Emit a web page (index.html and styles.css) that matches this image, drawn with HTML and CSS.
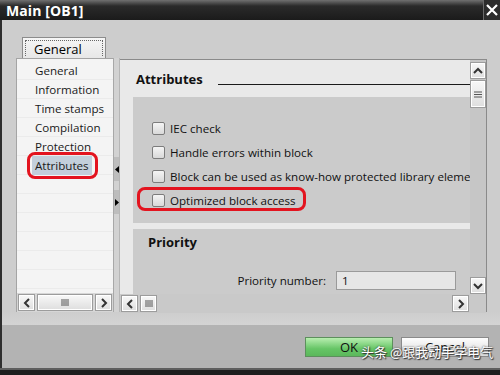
FILE: index.html
```html
<!DOCTYPE html>
<html lang="en">
<head>
  <meta charset="UTF-8">
  <title>Main [OB1]</title>
  <link rel="stylesheet" href="styles.css">
</head>
<body>
  <div class="window">
    <!-- Title bar -->
    <div class="titlebar">
      <span class="title">Main [OB1]</span>
      <span class="close">
        <svg width="14" height="14" viewBox="0 0 14 14"><path d="M2 2 L12 12 M12 2 L2 12" stroke="#fff" stroke-width="2.2"/></svg>
      </span>
    </div>

    <div class="content">
      <div class="tabs">
        <div class="tab"><span class="tab-label">General</span></div>
      </div>

      <div class="panel">
        <!-- Left navigation -->
        <div class="nav">
          <ul class="nav-list">
            <li>General</li>
            <li>Information</li>
            <li>Time stamps</li>
            <li>Compilation</li>
            <li>Protection</li>
            <li class="selected"><span class="sel">Attributes</span><span class="mark mark-nav"></span></li>
          </ul>
          <div class="hscroll">
            <span class="sbtn"><svg width="8" height="10" viewBox="0 0 8 10"><path d="M6 1 L2 5 L6 9" fill="none" stroke="#333" stroke-width="2"/></svg></span>
            <span class="thumb thumb-wide"><svg width="8" height="7" viewBox="0 0 8 7"><path d="M1 0V7M3 0V7M5 0V7M7 0V7" stroke="#555" stroke-width="1"/></svg></span>
            <span class="sbtn"><svg width="8" height="10" viewBox="0 0 8 10"><path d="M2 1 L6 5 L2 9" fill="none" stroke="#333" stroke-width="2"/></svg></span>
          </div>
        </div>

        <div class="splitter">
          <span class="split-btn"><svg width="4" height="7" viewBox="0 0 4 7"><path d="M4 0 L0 3.5 L4 7Z" fill="#000"/></svg></span>
          <span class="split-btn"><svg width="4" height="7" viewBox="0 0 4 7"><path d="M0 0 L4 3.5 L0 7Z" fill="#000"/></svg></span>
        </div>

        <!-- Right pane -->
        <div class="pane">
          <div class="pane-view">
            <div class="heading">
              <h2>Attributes</h2>
              <span class="rule"></span>
            </div>

            <div class="section checks">
              <label class="check"><span class="box"></span>IEC check</label>
              <label class="check"><span class="box"></span>Handle errors within block</label>
              <label class="check"><span class="box"></span>Block can be used as know-how protected library element</label>
              <label class="check"><span class="box"></span>Optimized block access<span class="mark mark-opt"></span></label>
            </div>

            <div class="section priority">
              <h3>Priority</h3>
              <div class="field">
                <span class="field-label">Priority number:</span>
                <span class="input">1</span>
              </div>
            </div>
          </div>

          <div class="vscroll">
            <span class="sbtn"><svg width="10" height="8" viewBox="0 0 10 8"><path d="M1 6 L5 2 L9 6" fill="none" stroke="#333" stroke-width="2"/></svg></span>
            <span class="thumb"><svg width="8" height="7" viewBox="0 0 8 7"><path d="M0 1H8M0 3.5H8M0 6H8" stroke="#555" stroke-width="1"/></svg></span>
            <span class="vtrack"></span>
            <span class="sbtn"><svg width="10" height="8" viewBox="0 0 10 8"><path d="M1 2 L5 6 L9 2" fill="none" stroke="#333" stroke-width="2"/></svg></span>
          </div>

          <div class="hscroll hscroll-pane">
            <span class="sbtn"><svg width="8" height="10" viewBox="0 0 8 10"><path d="M6 1 L2 5 L6 9" fill="none" stroke="#333" stroke-width="2"/></svg></span>
            <span class="thumb"><svg width="8" height="7" viewBox="0 0 8 7"><path d="M1 0V7M3 0V7M5 0V7M7 0V7" stroke="#555" stroke-width="1"/></svg></span>
            <span class="track"></span>
            <span class="sbtn"><svg width="8" height="10" viewBox="0 0 8 10"><path d="M2 1 L6 5 L2 9" fill="none" stroke="#333" stroke-width="2"/></svg></span>
          </div>
          <span class="corner"></span>
        </div>
      </div>
    </div>

    <!-- Dialog buttons -->
    <div class="footer">
      <button class="btn btn-ok">OK</button>
      <button class="btn">Cancel</button>
      <span class="watermark">头条 @跟我动手学电气</span>
    </div>
    <div class="bottom"></div>
  </div>
</body>
</html>
```

FILE: styles.css
```css
/* Reset */
* { margin: 0; padding: 0; box-sizing: border-box; }
html, body { width: 500px; height: 375px; overflow: hidden; }
body {
  font-family: "Open Sans", "Noto Sans", sans-serif;
  font-size: 11.6px;
  color: #111;
  background: #cdcdcd;
}

.window {
  display: flex;
  flex-direction: column;
  width: 500px;
  height: 375px;
}

/* Title bar */
.titlebar {
  height: 20px;
  flex: none;
  display: flex;
  align-items: center;
  justify-content: space-between;
  background: linear-gradient(#707070 0, #2a2a2a 6px, #1b1b1b 100%);
}
.title {
  color: #fff;
  font-weight: bold;
  font-size: 14px;
  padding-left: 6px;
  letter-spacing: 0.1px;
}
.close {
  width: 17px;
  height: 20px;
  display: flex;
  align-items: center;
  justify-content: center;
  border-left: 1px solid #6a6a6a;
  background: #2c2c2c;
}

/* Main content */
.content {
  height: 305px;
  flex: none;
  border-left: 2px solid #2e2e2e;
  padding: 17px 13px 0 14px;
  background: linear-gradient(#cdcdcd 0, #cdcdcd 292px, #d4d4d4 100%);
}

.tabs { height: 21px; display: flex; }
.tab {
  margin-left: 6px;
  width: 84px;
  height: 21px;
  border: 1px solid #8c8c8c;
  border-bottom: none;
  background: linear-gradient(#f6f6f6, #e7e7e7);
  padding: 2px;
}
.tab-label {
  display: block;
  height: 100%;
  border: 1px dotted #666;
  border-bottom: none;
  font-size: 13px;
  line-height: 17px;
  padding-left: 8px;
  color: #000;
}

.panel {
  display: flex;
  height: 254px;
}

/* Left navigation */
.nav {
  width: 97px;
  flex: none;
  display: flex;
  flex-direction: column;
  border-left: 1px solid #a4a4a4;
  border-top: 1px solid #a4a4a4;
  background: repeating-linear-gradient(#f4f4f4 0, #f4f4f4 18px, #ebebeb 18px, #ebebeb 19px);
  background-position: 0 2px;
}
.nav-list {
  list-style: none;
  flex: 1;
  padding-top: 2px;
}
.nav-list li {
  position: relative;
  height: 19px;
  line-height: 19px;
  padding-left: 18px;
  color: #1a1a1a;
}
.nav-list .sel {
  background: #c3cfdb;
  margin-left: -3px;
  padding: 2px 3px;
}

/* Red annotation marks */
.mark {
  position: absolute;
  border: 3px solid #e3141f;
  border-radius: 8px;
}
.mark-nav { left: 10px; top: -4px; width: 71px; height: 27px; }
.mark-opt { left: -15px; top: -1px; width: 169px; height: 24px; }

/* Scrollbars */
.hscroll {
  height: 19px;
  display: flex;
  align-items: center;
  gap: 2px;
  padding: 0 1px;
  background: #d6d6d6;
}
.sbtn, .thumb {
  flex: none;
  width: 17px;
  height: 17px;
  display: flex;
  align-items: center;
  justify-content: center;
  border: 1px solid #9c9c9c;
  background: linear-gradient(#f8f8f8, #dedede);
  box-shadow: inset 0 0 0 1px #fff;
}
.thumb-wide { width: 56px; }
.track { flex: 1; }
.hscroll-pane { background: #c9c9c9; }

.vscroll {
  display: grid;
  grid-template-rows: 17px 28px 1fr 17px;
  row-gap: 1px;
  padding-top: 2px;
  background: #c6c6c6;
}
.vscroll .sbtn, .vscroll .thumb { width: 16px; height: auto; }
.corner { background: #c9c9c9; }

/* Splitter */
.splitter {
  width: 7px;
  flex: none;
  display: flex;
  flex-direction: column;
  gap: 9px;
  padding-top: 99px;
  background: #d2d2d2;
  border-left: 1px solid #a8a8a8;
  border-right: 1px solid #b6b6b6;
}
.split-btn {
  height: 24px;
  display: flex;
  align-items: center;
  justify-content: center;
  background: #bdbdbd;
}

/* Right pane */
.pane {
  flex: 1;
  min-width: 0;
  display: grid;
  grid-template-columns: minmax(0, 1fr) 16px;
  grid-template-rows: 234px 19px;
  margin-top: 1px;
  border-top: 1px solid #8a8a8a;
  border-right: 1px solid #8a8a8a;
}
.pane-view {
  min-width: 0;
  overflow: hidden;
  background: #e9e9e9;
}

.heading {
  height: 37px;
  display: flex;
  align-items: center;
  padding-left: 16px;
}
.heading h2 {
  font-size: 13px;
  font-weight: bold;
  color: #111;
}
.heading .rule {
  flex: 1;
  height: 1px;
  margin: 11px 0 0 15px;
  background: #1a1a1a;
}

.section {
  margin-left: 13px;
  background: #cbcbcb;
}
.checks {
  height: 126px;
  padding: 19px 0 0 19px;
  margin-bottom: 6px;
}
.check {
  position: relative;
  display: flex;
  align-items: center;
  height: 24px;
  white-space: nowrap;
  color: #111;
}
.check:last-child { display: inline-flex; }
.box {
  width: 13px;
  height: 13px;
  flex: none;
  margin-right: 5px;
  border: 1px solid #7c7c7c;
  border-radius: 2px;
  background: linear-gradient(#f4f4f4, #d9d9d9);
}

.priority {
  height: 70px;
  padding: 3px 14px 0 15px;
}
.priority h3 {
  font-size: 13px;
  font-weight: bold;
  line-height: 20px;
  color: #111;
}
.field {
  display: flex;
  justify-content: flex-end;
  align-items: center;
  gap: 10px;
  margin-top: 19px;
}
.input {
  width: 120px;
  height: 19px;
  line-height: 17px;
  padding-left: 5px;
  border: 1px solid #9a9a9a;
  background: #e6e6e6;
}

/* Footer */
.footer {
  position: relative;
  height: 43px;
  flex: none;
  display: flex;
  justify-content: flex-end;
  gap: 8px;
  padding: 12px 11px 0 0;
  border-left: 2px solid #2e2e2e;
  background: #b3b3b3;
}
.btn {
  width: 88px;
  height: 20px;
  font-family: "Open Sans", "Noto Sans", sans-serif;
  font-size: 13px;
  line-height: 17px;
  color: #111;
  border: 1px solid #8a8a8a;
  background: linear-gradient(#fdfdfd, #dadada);
}
.btn-ok {
  border-color: #5d8f5d;
  background: linear-gradient(#b8eeb0, #66c566 60%, #5bb85b);
}
.watermark {
  position: absolute;
  left: 359px;
  top: 17px;
  font-family: "Noto Sans CJK SC", sans-serif;
  font-size: 13px;
  color: #fff;
  text-shadow: 0 0 2px #333, 1px 1px 1px #333;
}

.bottom {
  flex: 1;
  border-top: 2px solid #5e5e5e;
  background: #1e1e1e;
}
```
